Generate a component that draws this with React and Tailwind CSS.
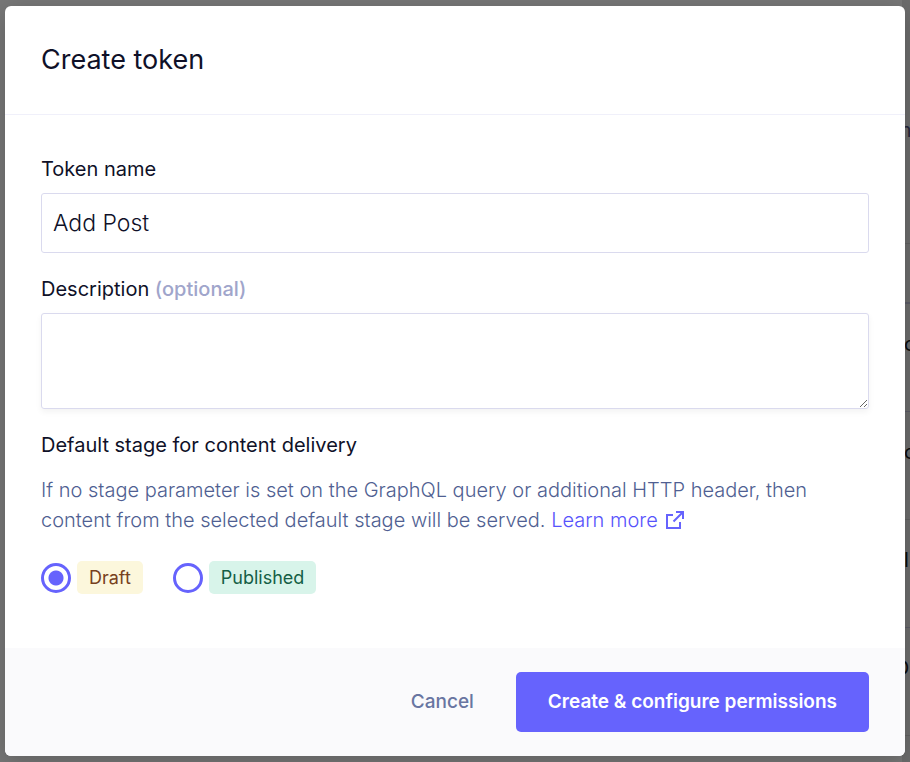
import React from "react";

const rows = [
  { text: "c", tone: "border-[#5b5b66]", indent: "pl-0.5" },
  { text: "c", tone: "border-[#606060]", indent: "pl-0.5" },
  { text: "l", tone: "border-[#5b5b66]", indent: "pl-0.5" },
  { text: "O", tone: "border-[#606060]", indent: "-ml-2" },
];

function Backdrop() {
  return (
    <div aria-hidden="true" className="absolute inset-0 flex justify-end overflow-hidden bg-[#777777]">
      <div className="w-2 shrink-0 bg-[#6c6c6c] pt-28 text-xl text-[#0c0c0c]">
        <div className="-ml-2 h-[132px] border-b border-[#606060] leading-9 text-[#26263a]">m</div>
        <div className="h-[60px] border-b-2 border-[#5b5b66]" />
        {rows.map((row, i) => (
          <div key={i} className={`h-[108px] border-b pt-5 leading-10 ${row.tone} ${row.indent}`}>
            {row.text}
          </div>
        ))}
      </div>
    </div>
  );
}

function StageOption({ value, label, badge, defaultChecked }) {
  return (
    <label className="flex items-center gap-1.5">
      <input
        type="radio"
        name="stage"
        value={value}
        defaultChecked={defaultChecked}
        className="size-[30px] appearance-none rounded-full border-3 border-[#6663fd] bg-white checked:bg-[radial-gradient(circle,#6663fd_7px,transparent_8px)]"
      />
      <span className={`rounded-[5px] px-3 text-lg leading-[33px] ${badge}`}>{label}</span>
    </label>
  );
}

export default function App() {
  return (
    <div className="relative min-h-screen px-[5px] py-1.5 font-['Inter',sans-serif] text-[#0f1128]">
      <Backdrop />
      <form
        role="dialog"
        aria-labelledby="dialog-title"
        onSubmit={(e) => e.preventDefault()}
        className="relative overflow-hidden rounded-md bg-white shadow-[0_6px_24px_rgba(0,0,0,0.2)]"
      >
        <header className="border-b border-[#f0f0fa] p-9">
          <h1 id="dialog-title" className="text-[27px] leading-9">Create token</h1>
        </header>

        <div className="px-9 pt-9 pb-[54px] text-xl">
          <label htmlFor="token-name" className="block leading-9">Token name</label>
          <input
            id="token-name"
            type="text"
            defaultValue="Add Post"
            className="mt-1.5 block h-[60px] w-full rounded-[3px] border border-[#dadaee] px-[11px] text-[23px] font-light outline-none"
          />

          <label htmlFor="description" className="mt-[18px] block leading-9">
            Description <span className="font-medium text-[#a0a5cb]">(optional)</span>
          </label>
          <textarea
            id="description"
            className="mt-1.5 block h-24 w-full rounded-[3px] border border-[#dadaee] px-[11px] py-2 text-[23px] font-light shadow-[0_3px_6px_rgba(0,0,0,0.05)] outline-none"
          />

          <fieldset className="mt-[18px]">
            <legend className="leading-9">Default stage for content delivery</legend>
            <p className="mt-3 font-light leading-[30px] text-[#505f92]">
              If no stage parameter is set on the GraphQL query or additional HTTP header, then content from the
              selected default stage will be served.{" "}
              <a href="#stages" className="whitespace-nowrap text-[#5753fc]">
                Learn more
                <svg
                  viewBox="0 0 18 18"
                  className="ml-2 inline size-[18px] align-[-2px] text-[#6663fd]"
                  fill="none"
                  stroke="currentColor"
                  strokeWidth="2"
                  aria-hidden="true"
                >
                  <path d="M7 4H1v13h13v-6M10 1h7v7M17 1 7.500 10.500" />
                </svg>
              </a>
            </p>
            <div className="mt-[26px] flex gap-[30px]">
              <StageOption value="draft" label="Draft" badge="bg-[#fcf7dc] text-[#77411d]" defaultChecked />
              <StageOption value="published" label="Published" badge="bg-[#d8f4ea] text-[#145e45]" />
            </div>
          </fieldset>
        </div>

        <footer className="flex items-center justify-end gap-2.5 bg-[#fafafc] px-9 py-6 text-[19px]">
          <button type="button" className="h-[60px] px-8 font-medium text-[#6875a1]">Cancel</button>
          <button type="submit" className="h-[60px] rounded-[5px] bg-[#6663fd] px-8 font-semibold text-white">
            Create &amp; configure permissions
          </button>
        </footer>
      </form>
    </div>
  );
}
